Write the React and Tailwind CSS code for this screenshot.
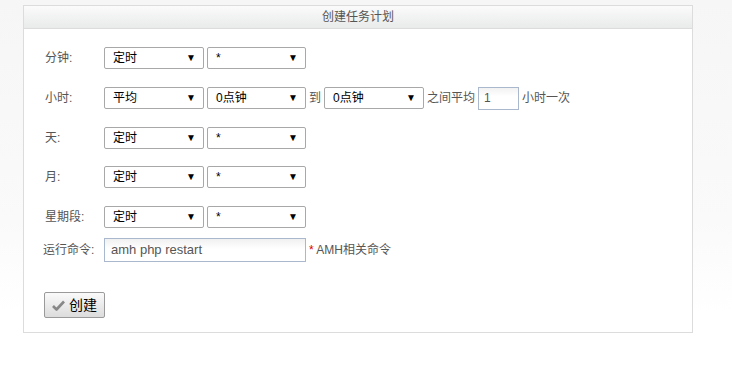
import React from "react";

const font = { fontFamily: '"Liberation Sans", "Noto Sans CJK SC", sans-serif' };

function Sel({ value, w = "w-[100px]" }) {
  return (
    <div className={`${w} h-[22px] border border-[#a8a8a8] rounded-[2px] bg-white flex items-center justify-between pl-[8px] pr-[7px] text-[12px] text-black`}>
      <span>{value}</span>
      <span className="text-[10px] leading-none">▼</span>
    </div>
  );
}

function Row({ label, children, className = "" }) {
  return (
    <div className={`flex items-center h-[22px] ${className}`}>
      <div className="w-[59px] text-[12px] text-[#555]">{label}</div>
      <div className="flex items-center gap-[3px]">{children}</div>
    </div>
  );
}

export default function App() {
  return (
    <div className="w-[732px] h-[368px] bg-[linear-gradient(to_bottom,#f6f6f6,#fafafa_60%,#ffffff_85%)] pt-[5px] pl-[23px]" style={font}>
      <div className="w-[670px] h-[328px] border border-[#dcdcdc] bg-white flex flex-col">
        <div className="h-[23px] border-b border-[#dcdcdc] bg-[linear-gradient(to_bottom,#fbfbfb,#e9eaea)] flex items-center justify-center text-[12px] text-[#555]">
          创建任务计划
        </div>
        <div className="pl-[21px] pt-[18px] flex flex-col">
          <Row label="分钟:">
            <Sel value="定时" />
            <Sel value="*" w="w-[99px]" />
          </Row>
          <Row label="小时:" className="mt-[18px]">
            <Sel value="平均" />
            <Sel value="0点钟" w="w-[99px]" />
            <span className="text-[12px] text-[#555]">到</span>
            <Sel value="0点钟" />
            <span className="text-[12px] text-[#555]">之间平均</span>
            <div className="w-[41px] h-[23px] border border-[#a9b8cc] bg-[linear-gradient(to_bottom,#f2f2f2,#ffffff_40%)] flex items-center pl-[5px] text-[12px] text-[#555]">1</div>
            <span className="text-[12px] text-[#555]">小时一次</span>
          </Row>
          <Row label="天:" className="mt-[18px]">
            <Sel value="定时" />
            <Sel value="*" w="w-[99px]" />
          </Row>
          <Row label="月:" className="mt-[17px]">
            <Sel value="定时" />
            <Sel value="*" w="w-[99px]" />
          </Row>
          <Row label="星期段:" className="mt-[18px]">
            <Sel value="定时" />
            <Sel value="*" w="w-[99px]" />
          </Row>
          <div className="flex items-center mt-[10px] h-[24px] -ml-[2px]">
            <div className="w-[61px] text-[12px] text-[#555]">运行命令:</div>
            <div className="w-[202px] h-[24px] border border-[#a9b8cc] bg-[linear-gradient(to_bottom,#f0f0f0,#ffffff_45%)] flex items-center pl-[6px] text-[13px] text-[#555]">
              amh php restart
            </div>
            <span className="ml-[3px] text-[12px] text-[#555]"><span className="text-[#d00]">*</span> AMH相关命令</span>
          </div>
          <div className="mt-[30px] -ml-[1px]">
            <div className="w-[61px] h-[26px] border border-[#9a9a9a] rounded-[2px] bg-[linear-gradient(to_bottom,#fafafa,#dcdcdc)] flex items-center justify-center gap-[4px] text-[14px] text-black">
              <svg width="13" height="11" viewBox="0 0 13 11">
                <path d="M1 6 L4.5 9.5 L12 1.5" fill="none" stroke="#888" strokeWidth="2.6" strokeLinejoin="round" />
              </svg>
              <span>创建</span>
            </div>
          </div>
        </div>
      </div>
    </div>
  );
}
